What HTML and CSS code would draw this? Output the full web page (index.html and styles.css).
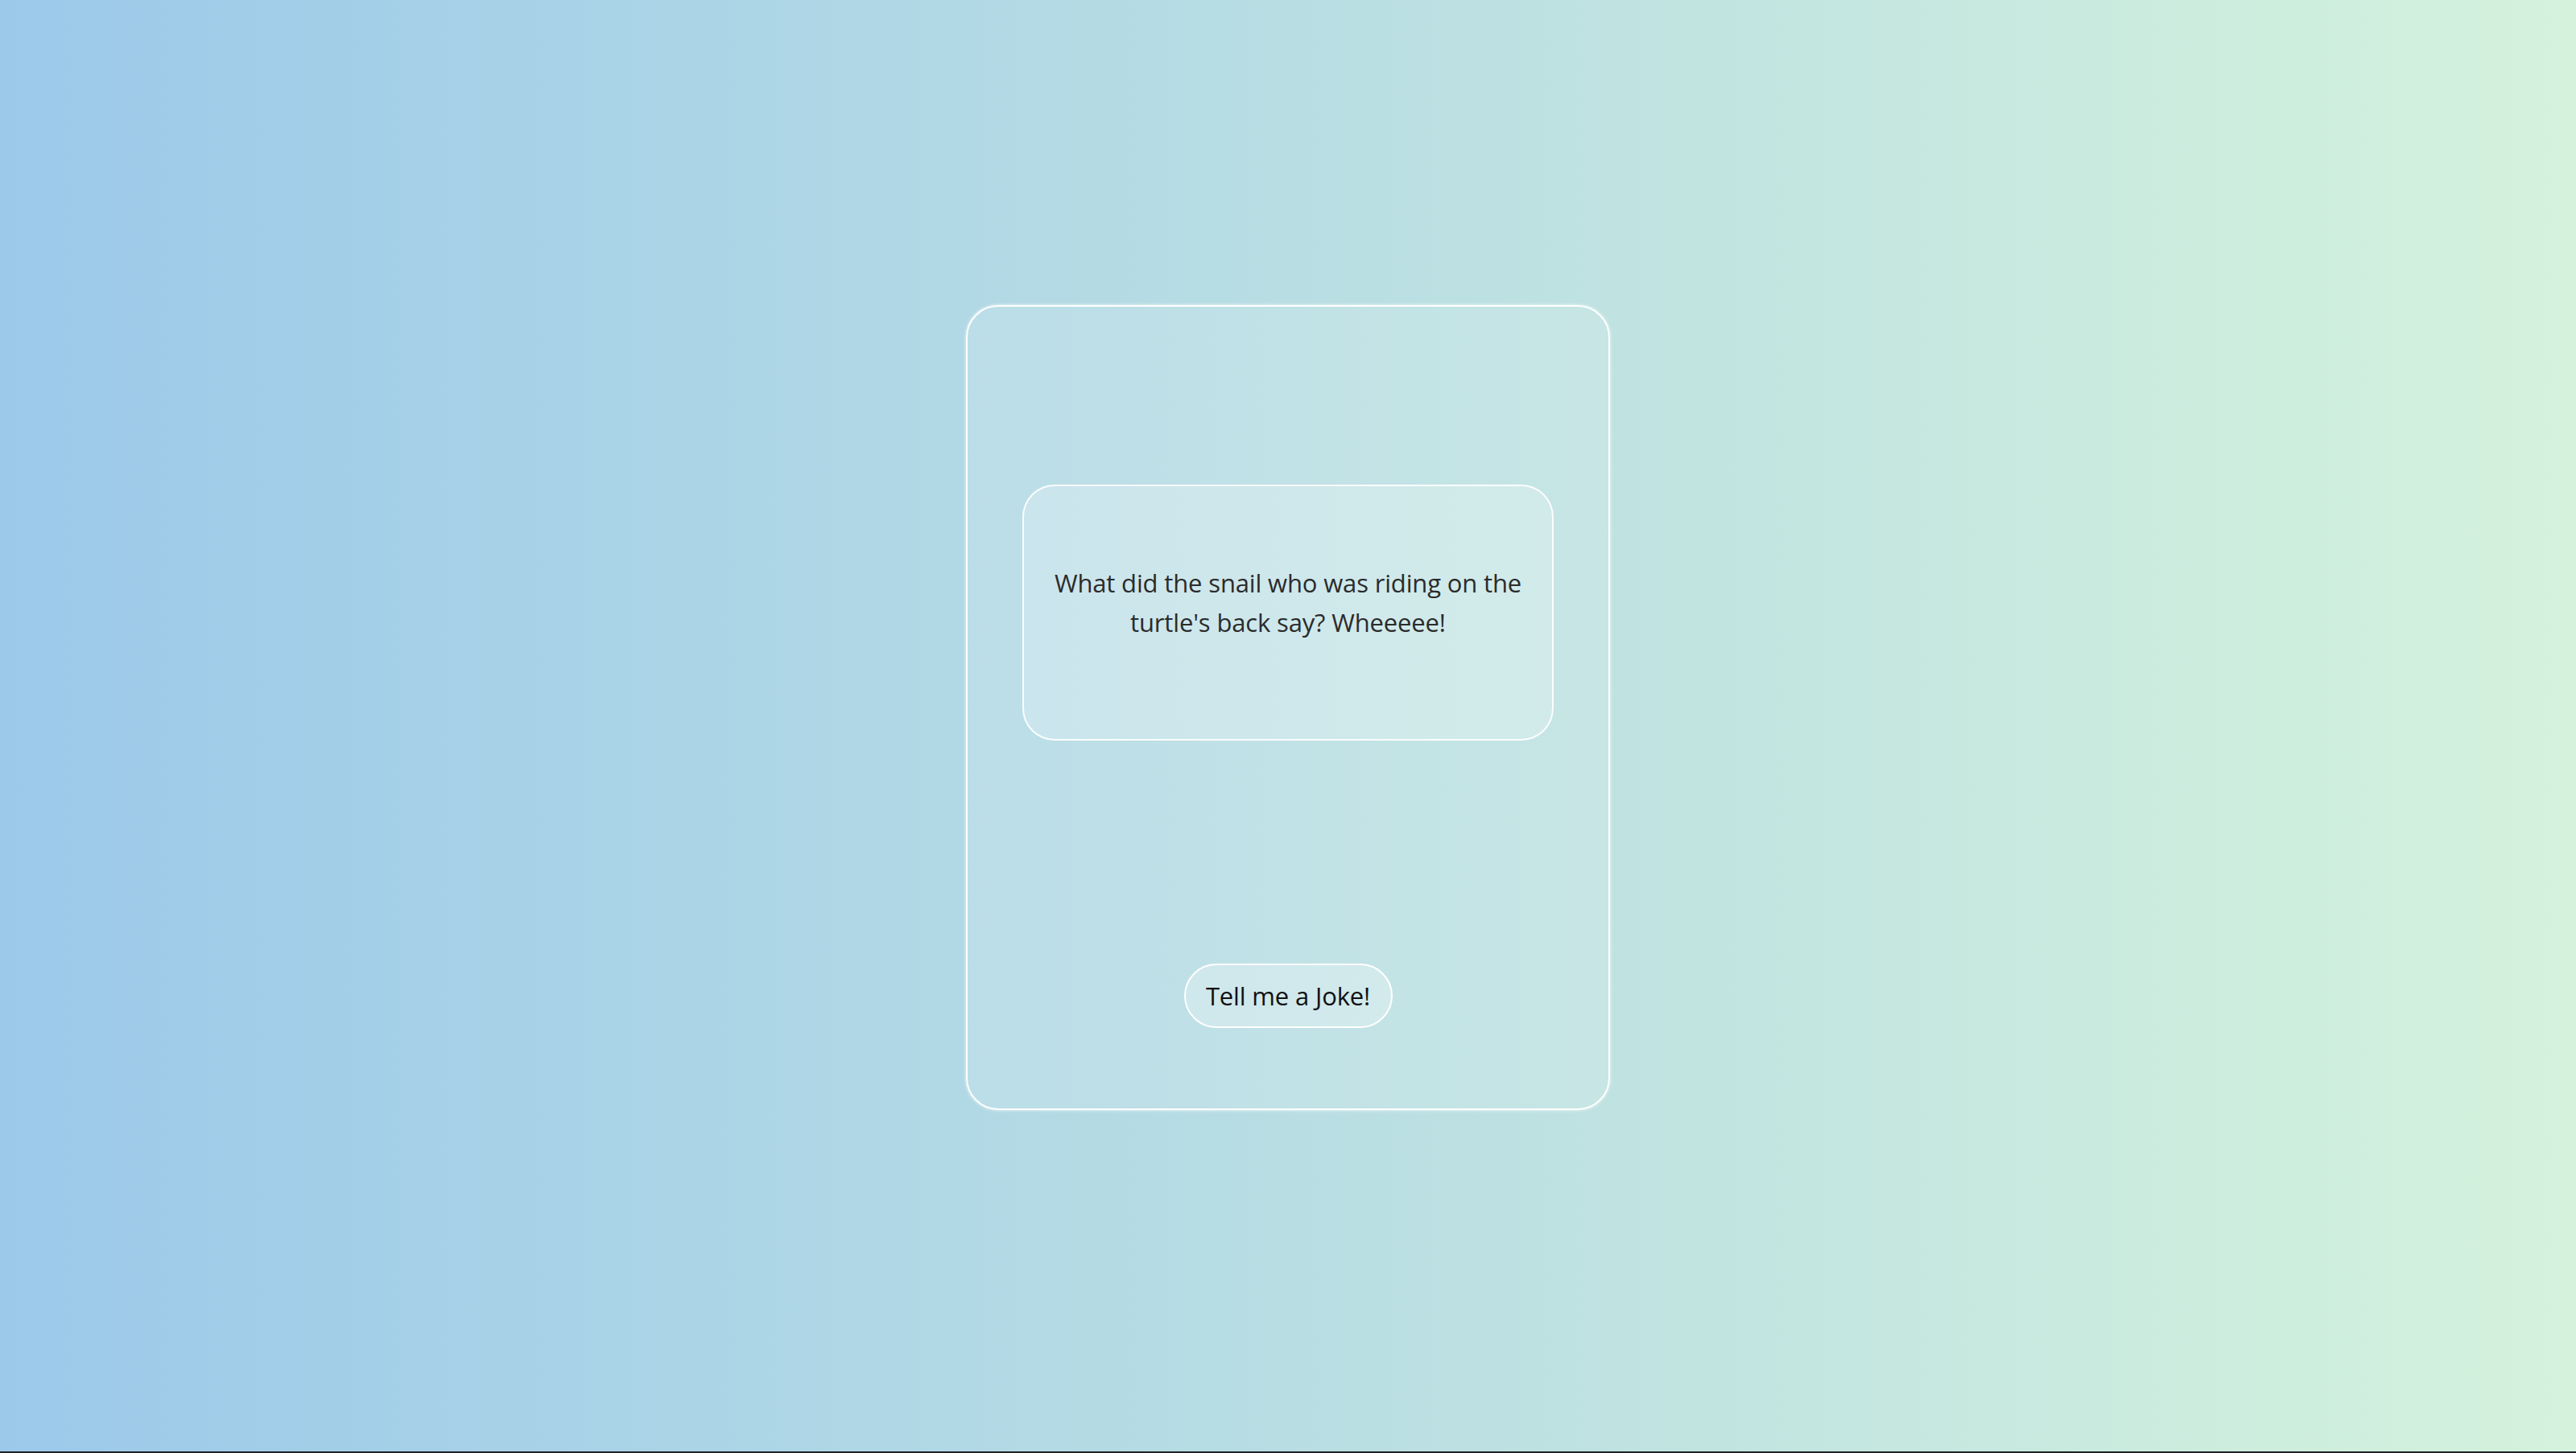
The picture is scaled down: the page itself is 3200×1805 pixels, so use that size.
FILE: index.html
```html
<!DOCTYPE html>
<html lang="en">
<head>
<meta charset="utf-8">
<title>Joke</title>
<link rel="stylesheet" href="styles.css">
</head>
<body>
<main class="page">
  <section class="card">
    <div class="joke">
      <p class="joke-text">What did the snail who was riding on the turtle's back say? Wheeeee!</p>
    </div>
    <button class="joke-btn" type="button">Tell me a Joke!</button>
  </section>
</main>
</body>
</html>
```
FILE: styles.css
```css
html {
  margin: 0;
  background: #202124;
}
body {
  margin: 0;
  font-family: "Open Sans", "Noto Sans", sans-serif;
}
.page {
  height: 1803px;
  box-sizing: border-box;
  padding-top: 379px;
  display: flex;
  flex-direction: column;
  align-items: center;
  background: linear-gradient(to right, #9cc9ea 0%, #d4f2dc 100%);
}
.card {
  width: 800px;
  height: 1000px;
  box-sizing: border-box;
  border: 2px solid #ffffff;
  border-radius: 40px;
  background: rgba(255, 255, 255, 0.13);
  box-shadow: 0 0 4px rgba(255, 255, 255, 0.8);
  display: flex;
  flex-direction: column;
  align-items: center;
  padding-top: 221px;
}
.joke {
  width: 660px;
  height: 318px;
  box-sizing: border-box;
  border: 2px solid rgba(255, 255, 255, 0.9);
  border-radius: 40px;
  background: rgba(255, 255, 255, 0.22);
  display: flex;
  align-items: flex-start;
  justify-content: center;
  padding: 96px 24px 0;
}
.joke-text {
  margin: 0;
  text-align: center;
  font-size: 31px;
  letter-spacing: -0.15px;
  line-height: 49px;
  color: #2b2b2b;
}
.joke-btn {
  margin-top: 277px;
  width: 259px;
  height: 80px;
  box-sizing: border-box;
  border: 2px solid #ffffff;
  border-radius: 40px;
  background: rgba(255, 255, 255, 0.25);
  font-family: "Open Sans", "Noto Sans", sans-serif;
  font-size: 31px;
  letter-spacing: -0.15px;
  color: #111111;
  padding: 0;
  cursor: pointer;
}
```
